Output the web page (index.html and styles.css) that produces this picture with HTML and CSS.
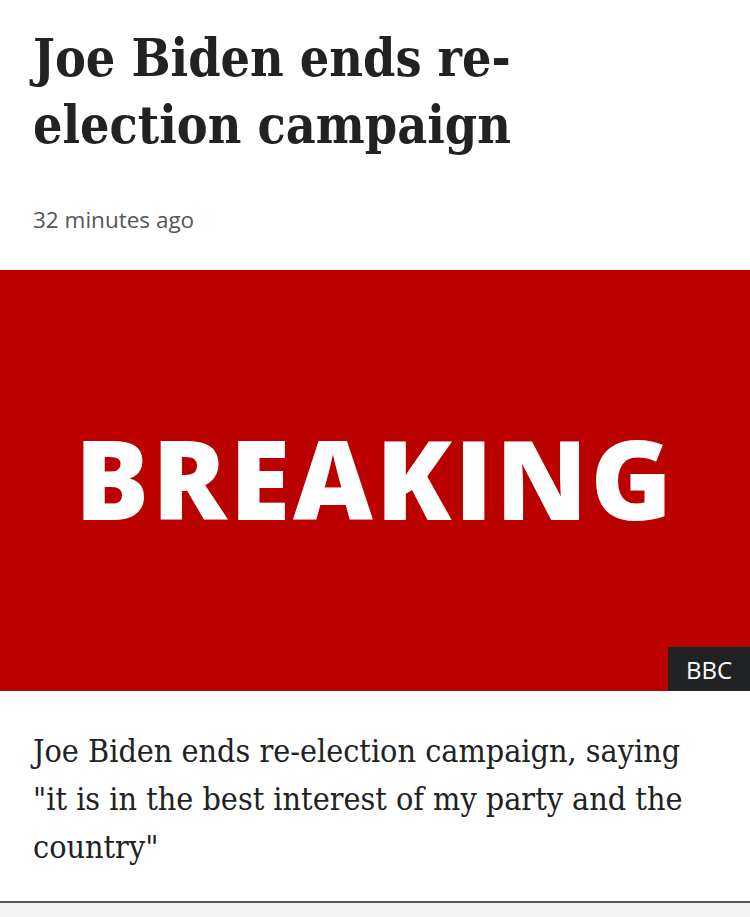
FILE: index.html
```html
<!DOCTYPE html>
<html>
<head>
<meta charset="utf-8">
<link rel="stylesheet" href="styles.css">
</head>
<body>
<article class="article">
  <header class="head">
    <h1 class="title">Joe Biden ends re-election campaign</h1>
    <div class="time">32 minutes ago</div>
  </header>
  <figure class="media">
    <div class="breaking">BREAKING</div>
    <span class="credit">BBC</span>
  </figure>
  <p class="lede">Joe Biden ends re-election campaign, saying "it is in the best interest of my party and the country"</p>
</article>
<div class="footer-strip"></div>
</body>
</html>
```

FILE: styles.css
```css
* { box-sizing: border-box; }
html, body { margin: 0; padding: 0; background: #fff; }
body { width: 750px; height: 917px; overflow: hidden; color: #202224; }
.article { border-bottom: 2px solid #545658; }
.head { padding: 25px 33px 35px; }
.title {
  margin: 0;
  max-width: 560px;
  font-family: "DejaVu Serif", "Liberation Serif", serif;
  font-stretch: condensed;
  font-weight: bold;
  font-size: 51.5px;
  line-height: 67px;
  color: #202224;
}
.time {
  margin-top: 46px;
  font-family: "Open Sans", "Liberation Sans", sans-serif;
  font-size: 22.5px;
  line-height: 30px;
  color: #545658;
}
.media {
  margin: 0;
  position: relative;
  height: 421px;
  background: #bb0000;
  display: flex;
  align-items: center;
  justify-content: center;
}
.breaking {
  font-family: "Open Sans", "Liberation Sans", sans-serif;
  font-weight: 800;
  font-size: 110px;
  letter-spacing: 3px;
  color: #fff;
  padding-bottom: 8px;
}
.credit {
  position: absolute;
  right: 0;
  bottom: 0;
  width: 82px;
  height: 44px;
  background: #202224;
  color: #fff;
  font-family: "Open Sans", "Liberation Sans", sans-serif;
  font-size: 24px;
  display: flex;
  align-items: center;
  justify-content: center;
}
.lede {
  margin: 0;
  padding: 36px 33px 30px;
  font-family: "DejaVu Serif", "Liberation Serif", serif;
  font-stretch: condensed;
  font-size: 32px;
  line-height: 48px;
  color: #202224;
}
.footer-strip { height: 20px; background: #f3f3f3; }
```
